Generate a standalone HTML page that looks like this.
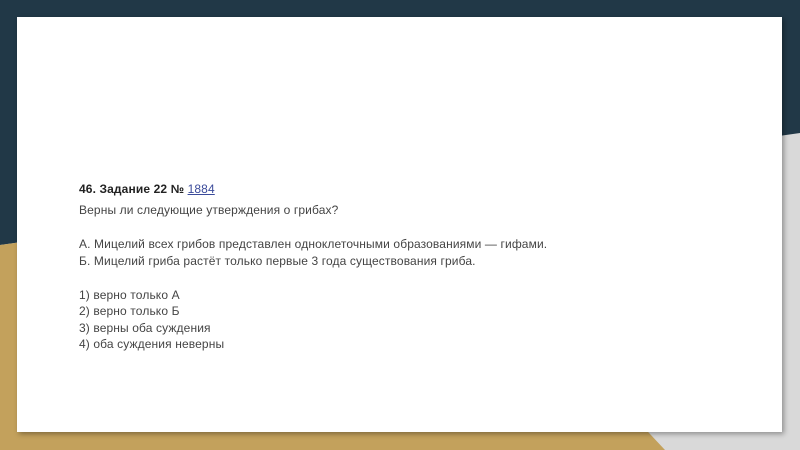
<!DOCTYPE html>
<html><head><meta charset="utf-8"><style>
body{margin:0;width:800px;height:450px;overflow:hidden;background:#d9d9d9;position:relative;font-family:"Liberation Sans",sans-serif}
svg{position:absolute;left:0;top:0}
.card{position:absolute;left:17px;top:17px;width:765px;height:415px;background:#fff;box-shadow:2px 2px 5px rgba(0,0,0,.35)}
.t{position:absolute;left:79px;font-size:12px;letter-spacing:.12px;color:#444;white-space:nowrap}
b{color:#222}
a{color:#3a4a9a;text-decoration:underline}
</style></head><body>
<svg width="800" height="450"><polygon points="0,0 800,0 800,133 0,245" fill="#213847"/><polygon points="0,245 420,189 665,450 0,450" fill="#c3a15c"/></svg>
<div class="card"></div>
<div class="t" style="top:182px"><b>46. Задание 22 № </b><a>1884</a></div>
<div class="t" style="top:203px">Верны ли следующие утверждения о грибах?</div>
<div class="t" style="top:237px">А. Мицелий всех грибов представлен одноклеточными образованиями — гифами.</div>
<div class="t" style="top:254px">Б. Мицелий гриба растёт только первые 3 года существования гриба.</div>
<div class="t" style="top:288px">1) верно только А</div>
<div class="t" style="top:304px">2) верно только Б</div>
<div class="t" style="top:321px">3) верны оба суждения</div>
<div class="t" style="top:337px">4) оба суждения неверны</div>
</body></html>
